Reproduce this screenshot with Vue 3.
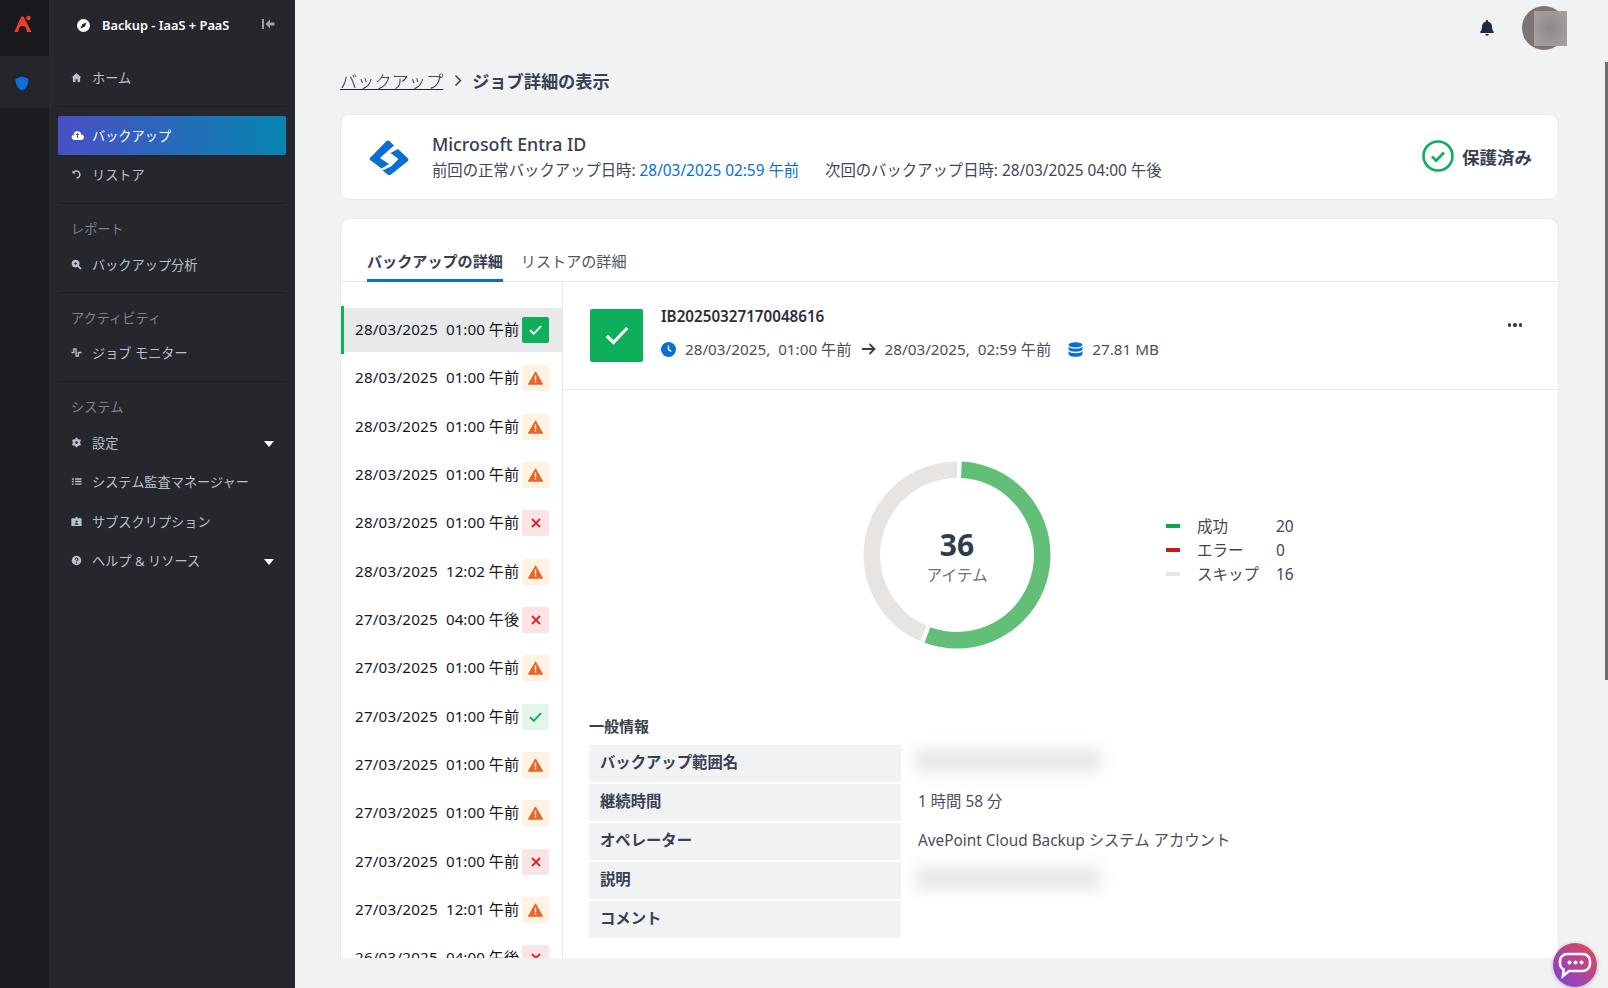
<template>
  <div class="app">
    <aside class="rail">
      <div class="rail-logo">
        <svg width="18" height="18" viewBox="0 0 18 18">
          <path d="M7.300 1.500h2.200L17.500 17h-4.700c-.3-4-1.800-6.200-4.300-6.200S4.500 13 4.200 17H.3z" fill="#f03c2e" />
          <circle cx="14.500" cy="3" r="2.300" fill="#f03c2e" />
        </svg>
      </div>
      <div class="rail-item">
        <svg width="14" height="15" viewBox="0 0 14 15">
          <path d="M7 .5l6.500 2.300c0 5.500-1.800 9.500-6.500 11.700C2.300 12.300.5 8.300.5 2.800z" fill="#0a6fd8" />
        </svg>
      </div>
    </aside>

    <nav class="side">
      <div class="side-head">
        <svg class="compass" width="13" height="13" viewBox="0 0 13 13">
          <circle cx="6.500" cy="6.500" r="6.500" fill="#fff" />
          <path d="M9.600 3.400L7.800 7.800 3.400 9.600 5.200 5.200z" fill="#26272c" />
        </svg>
        <span class="side-title">Backup - IaaS + PaaS</span>
        <svg class="collapse" width="13" height="10" viewBox="0 0 13 10">
          <rect x="0" y="0" width="2" height="10" fill="#9aa0aa" />
          <path d="M3.500 5L8 .8V3.500h4.500v3H8v2.700z" fill="#9aa0aa" />
        </svg>
      </div>

      <div class="side-group first">
        <a class="nav-item">
          <svg class="nav-icon" viewBox="0 0 12 12"><path d="M6 1L.5 6h1.600v5h2.800V7.800h2.200V11h2.800V6h1.600z" /></svg>
          ホーム
        </a>
      </div>

      <div class="side-group">
        <a class="nav-item active">
          <svg class="nav-icon wide" viewBox="0 0 13 12"><path d="M3.200 10.500a2.700 2.700 0 01-.6-5.300A3.800 3.800 0 016.500 1.800a3.800 3.800 0 013.700 3.100 2.800 2.800 0 01-.3 5.600z" /><path d="M6.500 4v4.500M5 5.500L6.500 4 8 5.500" stroke="#3b5cc0" fill="none" /></svg>
          バックアップ
        </a>
        <a class="nav-item">
          <svg class="nav-icon" viewBox="0 0 12 12"><path d="M3 3.500A3.800 3.800 0 116 9.800" fill="none" stroke="#b9c0cc" stroke-width="1.600" /><path d="M1.600 1.500v3.300h3.300z" /></svg>
          リストア
        </a>
      </div>

      <div class="side-group">
        <div class="side-label tall">レポート</div>
        <a class="nav-item">
          <svg class="nav-icon" viewBox="0 0 12 12"><circle cx="5" cy="5" r="4.200" /><path d="M7.800 7.800l3 3" stroke="#b9c0cc" stroke-width="2" /><path d="M3.500 5h3M5 3.500v3" stroke="#26272c" /></svg>
          バックアップ分析
        </a>
      </div>

      <div class="side-group">
        <div class="side-label">アクティビティ</div>
        <a class="nav-item">
          <svg class="nav-icon" viewBox="0 0 12 12"><path d="M.5 6h2.500V2h2.500v8h2.500V6H11.500" fill="none" stroke="#b9c0cc" stroke-width="1.500" /></svg>
          ジョブ モニター
        </a>
      </div>

      <div class="side-group last">
        <div class="side-label tall">システム</div>
        <a class="nav-item">
          <svg class="nav-icon" viewBox="0 0 12 12"><circle cx="6" cy="6" r="4" /><path d="M6 .8v10.400M1.500 3.400l9 5.200M1.500 8.600l9-5.200" stroke="#b9c0cc" stroke-width="2" /><circle cx="6" cy="6" r="1.500" fill="#26272c" /></svg>
          設定
          <span class="caret"></span>
        </a>
        <a class="nav-item">
          <svg class="nav-icon" viewBox="0 0 12 12"><path d="M4.500 2.500h7v1.500h-7zM4.500 5.300h7v1.500h-7zM4.500 8.100h7v1.500h-7zM1 2.500h2V4H1zM1 5.300h2v1.500H1zM1 8.100h2v1.500H1z" /></svg>
          システム監査マネージャー
        </a>
        <a class="nav-item">
          <svg class="nav-icon" viewBox="0 0 12 12"><path d="M1 2.500h10a.6.600 0 01.6.6v7.300a.6.600 0 01-.6.600H1a.6.600 0 01-.6-.6V3.100a.6.600 0 01.6-.6z" /><path d="M5 1h2v3H5z" /><circle cx="6" cy="6" r="1.200" fill="#26272c" /><path d="M3.800 9.500c.3-1.200 1.200-1.700 2.200-1.700s1.900.5 2.200 1.700z" fill="#26272c" /></svg>
          サブスクリプション
        </a>
        <a class="nav-item">
          <svg class="nav-icon" viewBox="0 0 12 12"><circle cx="6" cy="6" r="5.200" /><path d="M4.500 4.800a1.500 1.500 0 113 0c0 1-1.500 1.100-1.500 2.100" fill="none" stroke="#26272c" stroke-width="1.200" /><circle cx="6" cy="8.800" r=".8" fill="#26272c" /></svg>
          ヘルプ &amp; リソース
          <span class="caret"></span>
        </a>
      </div>
    </nav>

    <main class="main">
      <header class="topbar">
        <svg width="14" height="16" viewBox="0 0 14 16">
          <path d="M7 0a1.200 1.200 0 011.200 1.200v.5c2.300.5 3.800 2.400 3.800 4.800 0 3.200.9 4.400 1.700 5.200.4.400.1 1.300-.6 1.300H.900c-.7 0-1-.9-.6-1.300C1.100 10.900 2 9.700 2 6.500c0-2.400 1.500-4.300 3.800-4.800v-.5A1.200 1.200 0 017 0zM5.200 14h3.600a1.800 1.800 0 01-3.600 0z" fill="#1f2a3d" />
        </svg>
        <div class="avatar"><div class="avatar-blur"></div></div>
      </header>

      <div class="crumbs">
        <a class="crumb-link">バックアップ</a>
        <svg width="9" height="13" viewBox="0 0 9 13"><path d="M1.500 1.500l5 5-5 5" fill="none" stroke="#3a4150" stroke-width="1.500" /></svg>
        <strong>ジョブ詳細の表示</strong>
      </div>

      <section class="card summary">
        <svg class="entra" width="40" height="36" viewBox="0 0 40 36">
          <path d="M17.500 1Q19 0 20.500 1L25 5.500 11 18 20 24 12.500 28.500 1 20Q0 19 1 18Z" fill="#0a6fd0" />
          <path d="M29 9L39 18.500Q40 20 39 21L22 34.500Q20 36 18.500 34.500L13.500 30.500 22 26.500 29.500 19 21.500 13Z" fill="#0a6fd0" />
        </svg>
        <div class="summary-text">
          <div class="summary-title">Microsoft Entra ID</div>
          <div class="summary-meta">
            <span>前回の正常バックアップ日時: <span class="blue">28/03/2025 02:59 午前</span></span>
            <span>次回のバックアップ日時: 28/03/2025 04:00 午後</span>
          </div>
        </div>
        <div class="status">
          <svg width="32" height="32" viewBox="0 0 32 32">
            <circle cx="16" cy="16" r="14.500" fill="none" stroke="#0fae5a" stroke-width="2.600" />
            <path d="M10 16.500l4.200 4.200L22 12.500" fill="none" stroke="#0fae5a" stroke-width="2.600" />
          </svg>
          保護済み
        </div>
      </section>

      <section class="card detail">
        <div class="tabs">
          <a class="tab on">バックアップの詳細</a>
          <a class="tab">リストアの詳細</a>
        </div>
        <div class="detail-body">
          <ul class="jobs">
            <li v-for="(job, i) in jobs" :key="i" class="job" :class="{ current: i === 0 }">
              <span class="job-date">{{ job.date }}</span>
              <span class="job-time">{{ job.time }}</span>
              <span class="badge" :class="job.state">
                <svg v-if="job.state === 'warn'" width="15" height="14" viewBox="0 0 15 14">
                  <path d="M7.500.8L14.600 13.200H.4z" fill="#e8652a" stroke="#e8652a" stroke-linejoin="round" />
                  <path d="M6.800 4.500h1.400v4.700H6.800zM6.800 10h1.400v1.500H6.800z" fill="#fff" />
                </svg>
                <svg v-else-if="job.state === 'err'" width="10" height="10" viewBox="0 0 10 10">
                  <path d="M1 1l8 8M9 1L1 9" stroke="#d9232e" stroke-width="1.800" />
                </svg>
                <svg v-else width="13" height="10" viewBox="0 0 13 10">
                  <path d="M1 5.200l3.800 3.600L12 1.200" fill="none" stroke="currentColor" stroke-width="1.900" />
                </svg>
              </span>
            </li>
          </ul>

          <div class="pane">
            <div class="pane-head">
              <div class="big-check">
                <svg width="24" height="19" viewBox="0 0 24 19">
                  <path d="M1.800 10l6.700 6.500L22.200 2" fill="none" stroke="#fff" stroke-width="3.200" />
                </svg>
              </div>
              <div class="pane-info">
                <div class="job-id">IB20250327170048616</div>
                <div class="job-line">
                  <svg width="15" height="15" viewBox="0 0 15 15">
                    <circle cx="7.500" cy="7.500" r="7.500" fill="#0a6fd0" />
                    <path d="M7.500 3.500v4.200l2.800 1.800" fill="none" stroke="#fff" stroke-width="1.400" />
                  </svg>
                  <span>28/03/2025,&nbsp; 01:00 午前</span>
                  <svg class="arrow" width="14" height="12" viewBox="0 0 14 12">
                    <path d="M0 6h12M7.500 1L12.500 6 7.500 11" fill="none" stroke="#3a3f4a" stroke-width="1.800" />
                  </svg>
                  <span>28/03/2025,&nbsp; 02:59 午前</span>
                  <svg class="db" width="15" height="15" viewBox="0 0 15 15">
                    <ellipse cx="7.500" cy="2.800" rx="7" ry="2.600" fill="#0a6fd0" />
                    <path d="M.5 4.500c1 1.500 3.500 2.200 7 2.200s6-.7 7-2.200v3c-1 1.500-3.500 2.200-7 2.200s-6-.7-7-2.200zM.5 9c1 1.500 3.500 2.200 7 2.200s6-.7 7-2.200v3.200c-1 1.800-3.500 2.600-7 2.600s-6-.8-7-2.600z" fill="#0a6fd0" />
                  </svg>
                  <span>27.81 MB</span>
                </div>
              </div>
              <div class="more"><i></i><i></i><i></i></div>
            </div>

            <div class="chart-row">
              <div class="donut">
                <svg width="188" height="188" viewBox="0 0 188 188">
                  <g transform="rotate(-90 94 94)">
                    <circle cx="94" cy="94" r="85.250" fill="none" stroke="#e8e4e2" stroke-width="16.500" :stroke-dasharray="skipDash" :stroke-dashoffset="skipOffset" />
                    <circle cx="94" cy="94" r="85.250" fill="none" stroke="#62bf78" stroke-width="16.500" :stroke-dasharray="okDash" stroke-dashoffset="-4.500" />
                  </g>
                </svg>
                <div class="donut-center">
                  <div class="donut-num">36</div>
                  <div class="donut-label">アイテム</div>
                </div>
              </div>
              <div class="legend">
                <div v-for="l in legend" :key="l.name" class="legend-row">
                  <span class="swatch" :style="{ background: l.color }"></span>
                  <span class="legend-name">{{ l.name }}</span>
                  <span>{{ l.count }}</span>
                </div>
              </div>
            </div>

            <div class="general">
              <h3>一般情報</h3>
              <div class="info-table">
                <template v-for="r in info" :key="r.label">
                  <div class="info-label">{{ r.label }}</div>
                  <div class="info-value">
                    <span v-if="r.blur" class="blur-box" :class="r.blur"></span>
                    <template v-else>{{ r.value }}</template>
                  </div>
                </template>
              </div>
            </div>
          </div>
        </div>
      </section>
    </main>

    <div class="scroll-thumb"></div>

    <button class="chat">
      <svg width="34" height="28" viewBox="0 0 34 28">
        <path d="M9 3h16a7 7 0 017 7v3a7 7 0 01-7 7H11l-6 5 .6-6.500A7 7 0 012 13v-3a7 7 0 017-7z" fill="none" stroke="#fff" stroke-width="2.600" />
        <circle cx="11.500" cy="11.500" r="2" fill="#fff" />
        <circle cx="17.500" cy="11.500" r="2" fill="#fff" />
        <circle cx="23.500" cy="11.500" r="2" fill="#fff" />
      </svg>
    </button>
  </div>
</template>

<script setup>
const jobs = [
  { date: '28/03/2025', time: '01:00 午前', state: 'ok' },
  { date: '28/03/2025', time: '01:00 午前', state: 'warn' },
  { date: '28/03/2025', time: '01:00 午前', state: 'warn' },
  { date: '28/03/2025', time: '01:00 午前', state: 'warn' },
  { date: '28/03/2025', time: '01:00 午前', state: 'err' },
  { date: '28/03/2025', time: '12:02 午前', state: 'warn' },
  { date: '27/03/2025', time: '04:00 午後', state: 'err' },
  { date: '27/03/2025', time: '01:00 午前', state: 'warn' },
  { date: '27/03/2025', time: '01:00 午前', state: 'done' },
  { date: '27/03/2025', time: '01:00 午前', state: 'warn' },
  { date: '27/03/2025', time: '01:00 午前', state: 'warn' },
  { date: '27/03/2025', time: '01:00 午前', state: 'err' },
  { date: '27/03/2025', time: '12:01 午前', state: 'warn' },
  { date: '26/03/2025', time: '04:00 午後', state: 'err' }
]

const legend = [
  { name: '成功', count: 20, color: '#0ba84e' },
  { name: 'エラー', count: 0, color: '#cc1a1a' },
  { name: 'スキップ', count: 16, color: '#e5e7eb' }
]

const info = [
  { label: 'バックアップ範囲名', blur: 'blur-a' },
  { label: '継続時間', value: '1 時間 58 分' },
  { label: 'オペレーター', value: 'AvePoint Cloud Backup システム アカウント' },
  { label: '説明', blur: 'blur-b' },
  { label: 'コメント', value: '' }
]

// donut: 20 of 36 green from the top clockwise, rest grey, small gaps between
const circ = 2 * Math.PI * 85.25
const okLen = (circ * 20) / 36 - 4.5
const skipLen = circ - okLen - 9
const okDash = `${okLen} ${circ - okLen}`
const skipDash = `${skipLen} ${circ - skipLen}`
const skipOffset = -(okLen + 9)
</script>

<style>
html, body {
  margin: 0;
  background: #f1f2f4;
  overflow: hidden;
}
</style>

<style scoped>
.app {
  display: flex;
  height: 988px;
  overflow: hidden;
  position: relative;
  font-family: "Noto Sans", "Noto Sans CJK JP", sans-serif;
  color: #374151;
  background: #f1f2f4;
}

/* left rail */
.rail {
  width: 49px;
  flex-shrink: 0;
  background: #1c1d21;
}
.rail-logo {
  height: 56px;
  display: flex;
  align-items: center;
  justify-content: center;
  background: #18191c;
}
.rail-logo svg {
  margin-bottom: 8px;
  margin-right: 3px;
}
.rail-item {
  height: 52px;
  display: flex;
  align-items: center;
  justify-content: center;
  background: #24252a;
}
.rail-item svg {
  margin-right: 5px;
  margin-top: 2px;
}

/* nav */
.side {
  width: 246px;
  flex-shrink: 0;
  background: #26272c;
  box-sizing: border-box;
  padding: 0 9px;
  color: #b9c0cc;
  font-size: 13.200px;
}
.side-head {
  height: 58px;
  box-sizing: border-box;
  padding-bottom: 8px;
  display: flex;
  align-items: center;
  color: #fff;
}
.compass {
  margin-left: 19px;
}
.side-title {
  margin-left: 12px;
  font-size: 12.800px;
  font-weight: 600;
  flex: 1;
}
.collapse {
  margin-right: 11px;
  margin-top: -2px;
}
.side-group {
  border-bottom: 1px solid #1d1e22;
  padding-bottom: 8px;
  margin-bottom: 10px;
}
.side-group.first {
  margin-bottom: 9px;
}
.side-group.last {
  border-bottom: 0;
}
.side-label {
  height: 30px;
  line-height: 30px;
  padding-left: 13px;
  color: #7a8390;
}
.side-label.tall {
  height: 31px;
}
.nav-item {
  display: flex;
  align-items: center;
  height: 39.500px;
  padding-left: 13px;
  position: relative;
}
.nav-item.active {
  color: #fff;
  background: linear-gradient(90deg, #4a4fc4, #0585b0);
  border-radius: 2px;
}
.nav-icon {
  width: 11px;
  height: 11px;
  margin-right: 10px;
  flex-shrink: 0;
  fill: #b9c0cc;
}
.nav-icon.wide {
  width: 13px;
  height: 13px;
  margin-right: 8px;
}
.nav-item.active .nav-icon {
  fill: #fff;
}
.caret {
  position: absolute;
  right: 12px;
  top: 18px;
  border-left: 5px solid transparent;
  border-right: 5px solid transparent;
  border-top: 6px solid #fff;
}

/* main */
.main {
  flex: 1;
  min-width: 0;
  display: flex;
  flex-direction: column;
  box-sizing: border-box;
  padding: 0 49px 30px 45px;
}
.topbar {
  height: 56px;
  flex-shrink: 0;
  display: flex;
  align-items: center;
  justify-content: flex-end;
  gap: 28px;
  margin-right: -7px;
}
.avatar {
  width: 44px;
  height: 44px;
  border-radius: 50%;
  background: #7c7574;
  display: flex;
  align-items: center;
  justify-content: flex-end;
}
.avatar-blur {
  width: 33px;
  height: 35px;
  background: radial-gradient(#8f8988, #a8a3a2);
  margin-right: -1px;
}
.crumbs {
  height: 50px;
  flex-shrink: 0;
  display: flex;
  align-items: center;
  gap: 11px;
  font-size: 17.200px;
  margin-top: 0;
  padding-bottom: 1px;
  box-sizing: border-box;
}
.crumb-link {
  text-decoration: underline;
  font-weight: 300;
  color: #1f2430;
}
.crumbs strong {
  font-weight: 700;
  margin-left: -2px;
}
.card {
  background: #fff;
  border: 1px solid #e7e8eb;
  border-radius: 10px;
}
.summary {
  height: 86px;
  flex-shrink: 0;
  margin-top: 8px;
  box-sizing: border-box;
  display: flex;
  align-items: center;
  padding: 0 26px 0 28px;
}
.entra {
  margin-right: 23px;
  margin-top: 1px;
}
.summary-text {
  flex: 1;
  padding-top: 2px;
}
.summary-title {
  font-size: 17.800px;
  font-weight: 500;
  line-height: 26px;
  margin-top: -3px;
}
.summary-meta {
  display: flex;
  gap: 26px;
  font-size: 15.350px;
  line-height: 24px;
  margin-top: 1px;
  color: #3f4654;
}
.blue {
  color: #0a6fd0;
}
.status {
  display: flex;
  align-items: center;
  gap: 8px;
  font-size: 17.500px;
  font-weight: 700;
  margin-top: -2px;
}
.detail {
  flex: 1;
  min-height: 0;
  margin-top: 18px;
  border-bottom: 0;
  border-radius: 10px 10px 0 0;
  display: flex;
  flex-direction: column;
  overflow: hidden;
}
.tabs {
  height: 63px;
  flex-shrink: 0;
  box-sizing: border-box;
  display: flex;
  align-items: flex-end;
  padding-left: 26px;
  gap: 18px;
  border-bottom: 1px solid #e5e7eb;
  font-size: 15.100px;
}
.tab {
  height: 30px;
  line-height: 20px;
  color: #4b5563;
  box-sizing: border-box;
}
.tab.on {
  color: #374151;
  font-weight: 700;
  border-bottom: 3px solid #0a6fd0;
  margin-bottom: -1px;
  height: 31px;
}
.detail-body {
  flex: 1;
  min-height: 0;
  display: flex;
}
.jobs {
  list-style: none;
  margin: 0;
  padding: 26px 0 0;
  width: 222px;
  box-sizing: border-box;
  flex-shrink: 0;
  border-right: 1px solid #e5e7eb;
  overflow: hidden;
  font-size: 15.200px;
  color: #16181d;
}
.job {
  height: 44px;
  margin-bottom: 4.350px;
  box-sizing: border-box;
  padding-left: 14px;
  line-height: 43px;
  display: flex;
  align-items: baseline;
  position: relative;
}
.job.current {
  background: #e8e9eb;
}
.job.current::before {
  content: "";
  position: absolute;
  left: 0;
  top: -2px;
  bottom: -2px;
  width: 3px;
  background: #0fae5a;
}
.job-date {
  width: 91px;
  letter-spacing: .2px;
}
.badge {
  width: 27px;
  height: 26px;
  border-radius: 2px;
  display: flex;
  align-items: center;
  justify-content: center;
  position: absolute;
  left: 181px;
  top: 9px;
}
.badge.ok {
  background: #0fae5a;
  color: #fff;
}
.badge.done {
  background: #e2f6ea;
  color: #0fae5a;
}
.badge.warn {
  background: #fef3e2;
}
.badge.err {
  background: #fbe3e3;
}
.pane {
  flex: 1;
  min-width: 0;
  overflow: hidden;
}
.pane-head {
  height: 108px;
  box-sizing: border-box;
  border-bottom: 1px solid #e9eaec;
  display: flex;
  padding: 27px 0 0 27px;
  position: relative;
}
.big-check {
  width: 53px;
  height: 53px;
  border-radius: 2px;
  background: #0fae5a;
  display: flex;
  align-items: center;
  justify-content: center;
}
.pane-info {
  margin-left: 18px;
}
.job-id {
  font-size: 15.200px;
  font-weight: 600;
  line-height: 20px;
  margin-top: -3px;
  color: #2c2f36;
}
.job-line {
  display: flex;
  align-items: center;
  margin-top: 13px;
  font-size: 15.250px;
  line-height: 20px;
  color: #4b4f58;
}
.job-line > span {
  margin-left: 9px;
}
.arrow {
  margin-left: 10px;
}
.db {
  margin-left: 17px;
}
.more {
  position: absolute;
  right: 36px;
  top: 41px;
  display: flex;
  gap: 2px;
}
.more i {
  width: 3.500px;
  height: 3.500px;
  border-radius: 50%;
  background: #2f3b4e;
}
.chart-row {
  display: flex;
  align-items: center;
  height: 188px;
  margin-top: 71px;
  padding-left: 300px;
}
.donut {
  width: 188px;
  height: 188px;
  position: relative;
}
.donut-center {
  position: absolute;
  left: 0;
  right: 0;
  top: 66px;
  text-align: center;
}
.donut-num {
  font-size: 30px;
  font-weight: 700;
  line-height: 36px;
  color: #2f3b4e;
}
.donut-label {
  font-size: 15.700px;
  line-height: 24px;
  color: #6b7280;
}
.legend {
  margin-left: 115px;
  font-size: 15.500px;
  line-height: 24px;
  margin-top: -10px;
}
.legend-row {
  display: flex;
  align-items: center;
  height: 24px;
  color: #3f4654;
}
.swatch {
  width: 14px;
  height: 4px;
  margin-right: 17px;
}
.legend-name {
  width: 79px;
}
.general {
  padding: 0 0 0 26px;
  margin-top: 66px;
}
.general h3 {
  margin: 0 0 8px;
  font-size: 15px;
  line-height: 22px;
  font-weight: 700;
  color: #3a3f4a;
}
.info-table {
  display: grid;
  grid-template-columns: 312px 1fr;
  grid-auto-rows: 37px;
  row-gap: 2px;
  font-size: 15.350px;
}
.info-label {
  background: #f1f2f4;
  display: flex;
  align-items: center;
  padding: 0 0 6px 11px;
  box-sizing: border-box;
  font-weight: 700;
  color: #374151;
}
.info-value {
  display: flex;
  align-items: center;
  padding: 0 0 6px 17px;
  box-sizing: border-box;
  color: #4b4f58;
  position: relative;
}
.blur-box {
  width: 180px;
  height: 18px;
  background: #e6e6e6;
  box-shadow: 0 0 0 6px #f7f7f7;
  filter: blur(7px);
}

.scroll-thumb {
  position: absolute;
  right: 0;
  top: 62px;
  width: 3px;
  height: 618px;
  background: #6f7074;
}
.chat {
  position: absolute;
  left: 1553px;
  top: 943px;
  width: 44px;
  height: 44px;
  border: 0;
  border-radius: 50%;
  padding: 0;
  background: linear-gradient(45deg, #7a3fe4, #e84a4a);
  box-shadow: 0 1px 4px rgba(0, 0, 0, .25);
  display: flex;
  align-items: center;
  justify-content: center;
}
</style>
